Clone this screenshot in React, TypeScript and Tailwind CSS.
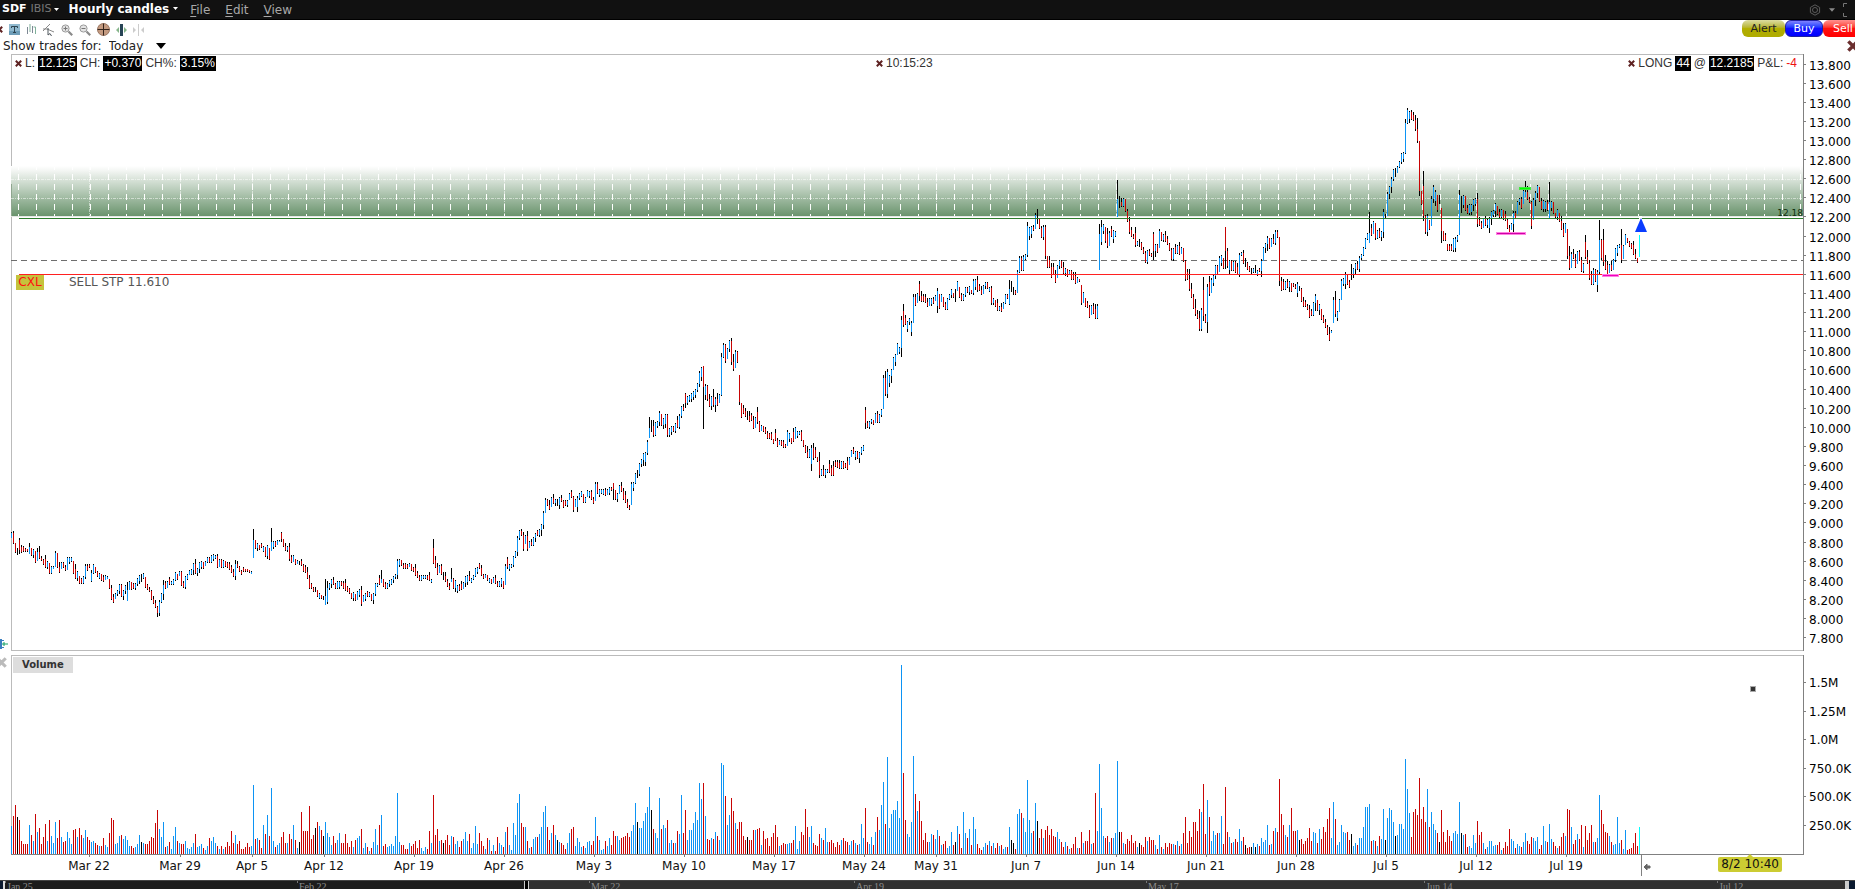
import React from "react";

type Tone = "b" | "r" | "k" | "c";

interface Block {
  base: number;
  data: string;
}

const TONES: Record<Tone, string> = {
  b: "#0c93f4",
  r: "#c80404",
  k: "#000000",
  c: "#00ffff",
};

/* Sample blocks keep three units per pixel. Price samples are high,low[,close]. */
const PRICE_BLOCKS: Block[] = [
  {
    base: 520,
    data: `37,55 33,72 68,98 85,104 54,102,90 75,98 77,97 84,95 86,96 70,102,82 84,108 88,115 93,128 84,122,96 78,118 107,123 116,134 104,143 122,146 128,163 138,162 138,146 94,140 98,145 127,160 126,148 126,145 136,152 111,150 111,132 112,125 122,163 133,178 152,182 168,193 175,193 168,193 132,176 132,152 132,145 150,186,160 132,162 142,158 152,172 160,178 162,182 165,186 165,180 167,178 177,206 195,240 222,250 218,236 210,228 192,222 192,230 210,240 196,221 186,243,210 183,211 185,210 190,208 190,210 174,198 165,193 162,186 160,176 171,204 192,210 200,216 210,240 228,252 240,264 258,291,279 240,288 220,250 180,240,195 183,206 183,204 171,195 183,195 178,195 156,182 162,180 153,168 153,198 183,204 168,208 162,180 150,165 147,165 128,165 118,162 145,169 127,158 123,148 126,146 123,138 111,128 111,128 105,128 102,123 104,116 102,144 117,141 117,145 120,144 122,140 126,144 126,150 135,160 147,171 120,180,132 122,145 138,156 150,164 141,156 147,157 148,157 150,160 153,162
27,113,60 60,87 69,94 75,90 68,84 78,96 82,110 75,117 84,119 24,93,66 63,86 63,82 60,76 60,66 36,66,58 57,82 68,94 78,96 68,122 105,130 105,126 117,134 120,132 123,134 117,138 132,156 135,158 141,178 164,208 190,208 201,216 200,216 210,232 220,236 226,238 228,240 176,255,228 182,252,204 190,210 178,204 171,196 190,208 183,208 182,207 183,198 183,208 177,214 198,216 204,222 218,238 216,243 222,243 213,240 207,232 198,258 225,246 218,242 213,232 217,230 222,243 219,252 190,228 189,200 165,196 150,190,177 177,200 186,208 190,206 180,200 177,196 168,190 162,176 117,176 118,140 120,138 128,146 129,146 132,146 129,140 133,152 141,156 132,168 153,174 165,182 165,182 165,178 165,176 165,180 156,182 177,188
57,132,130 108,145 128,166 135,160 132,165 156,180 156,186 177,202 190,209 144,186,177 175,208 180,216 195,220 192,213`,
  },
  {
    base: 320,
    data: `783,810 786,806 768,800 765,796 753,782 775,788 765,780 745,770 741,762 729,746 735,768 762,776 762,774 765,782 774,788 777,792 771,788 765,792 782,800 784,802 775,800 782,806 732,796 711,746,740 732,752 732,744 708,741 693,714 648,708 630,660 627,648 636,693 645,672 633,693 663,685 657,678 651,678 639,666 630,648 627,651 612,648 573,627 534,579 537,558 540,570 531,560 522,552 537,558 537,558 531,567 525,546 540,564 540,558 540,560 519,540 510,534 528,576 537,561 528,576 519,540 513,531 522,550 530,549 510,532 513,534 510,540 532,552 486,543 486,522 507,530 507,522 507,525 504,528 507,525 501,525 501,513 489,540,508 510,540 519,546 495,522 486,516 504,540 513,549 537,564 555,570 486,555 486,513 459,492 450,474 429,468 417,440 399,438 396,438 360,405 291,354,324 300,336 300,351 306,348 303,324 273,318 282,318 294,326 282,324 282,351 324,351 318,345 318,336 309,339 288,324 282,327 258,294 252,273 219,264,248 228,255 225,246 219,246 213,240 207,234 189,216 153,201 141,183
138,327,201 192,240 195,243 222,261 228,270 207,261 231,276 219,258 222,249 99,228 69,114 72,129 84,117 60,96 54,135 102,153 90,144 93,129
165,255 249,294 255,282 264,291 273,300 273,306 279,303 288,327 291,324 261,312,306 303,336 315,333 318,336 321,342 333,357 339,357 336,360 357,372 327,363 354,381 360,375 360,378 360,384 372,384 330,378 339,366 354,372 324,366 321,357 333,354 333,345 330,363 360,381 375,399 378,414 387,414 375,453,384 369,420 381,414 411,426 396,474 447,468 435,468 447,474 447,459 420,459 435,468 423,468 420,441 420,444 420,447 423,447 423,447 429,444 411,450 411,435 390,411 381,402 393,420 393,417 396,429 381,405 375,393
261,327,309 303,324 303,327 297,312 300,315 279,309 273,309 282,309 267,291 165,267 153,228 147,234 165,201 147,189 111,150 102,138 69,105 81,102`,
  },
  {
    base: 140,
    data: `528,651 492,561 525,555 543,576 534,555 543,588 462,549 462,498 459,489 423,483,468 453,486 462,486 462,489 474,501 474,498 474,498 471,492 465,483 444,519 462,507 462,486 471,501 486,510 474,510 462,480 447,474 459,474 447,486 423,453 441,474 459,483 462,483 441,471 441,459 438,465 450,462 417,465 417,450 408,456,450 432,453 438,465 435,462 426,447 426,447 441,456 438,495 474,495 480,501 477,513 498,513 489,516 486,507 462,492 462,477 420,495,448 423,456 441,465 450,465 390,459 348,399 348,393 345,393 342,360 246,351 261,300 258,294 255,273 219,267 207,252 234,267 258,294 255,300 255,357 348,384 348,384 369,414 369,405 390,429 375,414 360,387 360,384 366,402 384,408 387,411 390,405 390,420 396,420 396,432 411,429 417,426
435,495 456,489 474,501 483,504 495,534 495,525 489,522 492,537 492,537
252,390,282 240,315,261 252,282 261,309 264,324 273,318 258,291 270,309 273,291 120,231,176 168,204 174,201 174,201 177,216 207,246 231,282 261,291 282,297 261,321 303,318 297,321 306,330 321,342 333,369 330,372 327,348 339,351 276,360,333 312,351 312,339 267,324 276,303 282,306 273,306 288,315 309,333 324,360 324,363 312,342 315,342 306,345 321,342 324,366 360,423 387,420 387,453 429,474 462,507 477,528 510,537 513,573 504,573 411,543,528 522,549 432,579,440 408,468 414,459 405,438 375,417 375,405 348,396 345,378 354,387 261,387,334 324,384 360,402 360,393 363,393 363,399 369,405 339,411`,
  },
  {
    base: 90,
    data: `486,498 480,522 504,531 516,540 528,546 534,555 534,549 525,549 540,558 534,546 507,561 471,513 459,489 438,483 444,477 444,471 432,462 420,465 420,444 441,588 561,603 567,600 573,600 567,594 573,606 579,606 579,591 582,597 576,621 588,603 594,636 621,651 630,651 642,660 645,684 657,678 636,678 612,663 630,663 642,675 657,690 675,699 687,714 705,735 711,753 720,729
621,699 603,681 663,693 627,666 567,630 564,588 546,597 555,585 570,594 522,570 534,564 519,552 513,540 498,546 492,510 471,498 444,477 429,450 366,459,430 402,438 393,432 399,450 420,447 414,444 423,453 357,444 372,384 306,378 288,327 261,309 237,273 234,261 228,249 213,234 189,222 186,216 87,192 54,102 63,99 60,90 66,93 75,123 84,159 153,318 303,345 243,393,378 375,432 372,438 390,420 318,408 285,339 300,348 315,366 315,342 354,459,423 423,453 429,453
462,483 462,483 462,483 443,486 441,486 435,456 300,435 318,369 315,354 318,363 345,372 342,375 342,375 327,363 324,348 309,411 381,408 393,417 384,414 378,408 387,414 381,429 363,405 360,381 339,381 348,375 357,384 357,387 360,390 363,393 387,417 405,432 399,420 363,426 363,387 333,372 324,345 321,357 300,342 273,321,306 288,330 321,339 333,417 324,390 303,348 285,324 291,336 324,360 330,366 333,366 330,363 276,384,336 333,363 336,372 369,384 357,390 369,396 378,420 399,441 399,429
417,507 468,540 486,534 477,507 492,534 483,522 480,513 501,546 519,549 435,507 480,522 510,570 543,585 534,585 537,576 540,606 390,552,450 447,510 417,528 495,540 513,555 522,549 513,543 507,540 474,516 465,498 462,474 417,519 465,507 432,465 444,459 453,471 459,477 453,495 477,507 504,519 429,501`,
  },
];

const VOLUME_BLOCKS: Block[] = [
  {
    base: 1002,
    data: `917b 888r 855r 891k 900r 963r 972r 972r 972r 915b 945r 963b 882r 936b 924r 972r 951r 912r 963b 900r 948b 969b 906b 954r 900r 951b 966r 963r 936b 954b 972b 930r 927r 951b 924r 945r 954b 930b 951r 960r 966b 963b 969r 975r 978b 978r 954r 975b 981b 939r 894r 900r 972b 969b 948b 945r 957b 948b 960b 978b 978r 984r 981b 972b 945b 966k 969b 972r 972r 963r 951r 954r 909r 870r 927b 951b 906b 981r 978b 966r 987b 948b 921b 963r 969b 972r 972r 963b 984b 987b 981b 969b 942r 981b 978b 972b 984r 990b 978b 954r 963b 951b 969b 978r 987b 978r 987b 981r 966r 978r 933r 969r 945b 972r 963r 987r 987r 981r 969r 981r 978b
795b 957r 954b 960r 984r 915b 942r 885b 948r 804b 963b 981r 975b 969b 951r 936r 969r 969b 942r 957r 915b 960r 984b 966k 876r 933r 933r 933r 858r 957r 945r 924k 906r 918b 930r 948k 906b 939b 951b 975b 948r 969r 960b 939b 969r 969r 942r 969r 981r 963r 981b 960r 954b 948b 927r 984b 969b 981r 993b 984r 966b 927b 975b 915r 885b 978r 972r 981b 978b 972b 978b 948b 819b 966b 975r 975r 987r 987r 969b 978r 972r 963r 984r 960r 984b 993b 981b 987r 933r 969b
825r 945r 927r 963b 960r 969k 960r 945r 975r 948b 951r 972b 963b 981r`,
  },
  {
    base: 642,
    data: `603r 597b 576b 603b 582r 624b 609b 558b 612b 579r 603r 618r 627b 594r 600b 633r 615b 633r 591r 609b 615b 621r 576b 561r 615b 630b 549b 585b 489b 462b 549r 561r 561b 603r 624b 621r 597b 591b 591r 582b 561b 516b 498b 561r 600r 579b 555r 585b 600k 606b 609r 615r 627r 609b 579b 567r 561r 618b 594b 606b 621b 618r 624b 606b 603b 615r 603r 531b 588r 600b 630b 627b 603r 618b 594b 615r 573r 588r 588b 600b 594r 591r 588r 579r 591r 573b 555b 489b 546k 564b 564b 543b 519b 501b 441b 510k 567r 579b 594b 474b 567r 555b 564b 540r 609b 600b 609r 609b 573r 582b 465b 579r 510r 600b 570b 570b 549b 516b 540b 429b 477b 429r 528b 597r 600r 594b 597r 576b 588r 600b 369b 375b 468r 555b 525b 474r 513r 549b 567r 546r 546r 588r 600r 591k 600r 600r 570r 570b 567r 564r 615b 573r 597r 594r 618r 591r 579r 555r 591r 618b 615r 609r 612r 612b 609b 609r 600r 558b 627b 603b 576r 585r 507r 561r 591b 558b 609r 615r 618r 582r 594b 600r 564b 606b 606r 600r 609r 621r 606r 615r 600b 594r 603r 606r 615b 603b 600r 609b 615r 612b 552b 594b 504r 606r 612b 591b 615r 576b 531r 570b 495b 426b 552r 351b 564b 522b 510b 510b 483b 534b 75b 399r 540r 582b 591b 546b 348b 462r 513b 483r
543r 600r 579r 606r 606b 582b 585r 597b 570b 588r 615b 612r 603r 624b 618b 576b 615r 606k 558b 582r 624r 516b 579b 594r 567b 615r 531b 567b 612r 624r 630r 621b 609b 615r 603b 618r 609b 624r 609r 618b 615r 627b 621b 621r 561b 600k 609k 627r 522b 507b 519r 534b 576b 420b 540b 579b 573r 489b 543k 594r 567r 594b 570r 558r 585r 567r 588r 591r 576b 597b 606r 621r 606b 618r 627b 624r 612r 591r 624b 624r 576r 609b 603r 603r 570r 612b 609r 459r 573b 372b 504b 588b 594r 588r 606b 594r 594b 579b 363b 576k 576r 609b 612r 597r 603r 585r 609r 603r 621b 609k 615r 621r 591r 603b 591r 600r 600r 615b 627r 585b 621r 627b 609r 621r 609r 612r 612b 615r 603b 618r 612b 579r 531r 609r 573r 591r 546r 546r 573r 507r 516b 432r 582r 480b 531r 603b 573b 585b 579r 579b 528b 612r 441r 576r 591b 609r 606b 597r 606r 567b 603b 591r 615k 624r 621r 621k 609b 621k 612b 618r 594b 606b 600b 555b 615r 612b 573r 564b 576r 417r 522r 555r 585b 591r 555b 504r 573r 573r 570b 600k 597r 612r 603r 594r 564r 603r 576b 579b 609r 567b 597r 561r 576r 537r 504r 594b 486b 537r 615b 606b 555b 576b 579b 576r 600r 582k 618b 609b 615r 594b 594b 561b 501b 501b 492b 603r 600b 603r 618b 588r 597b 507b 600k 534b 504b 510b 546b 588k 585b 552b`,
  },
  {
    base: 702,
    data: `612b 627b 417b 507b 579b 651r 576r 567r 585r 474r 597r 561r 606r 507b 621r 576b 612b 630b 639r 666k 570r 636r 666r 630r 648r 663r 639b 633b 642b 546b 639k 645b 642r 681r 678b 684b 645b 669b 603r 645r 636r 669b 687r 681b 663b 663b 678b 675b 675r 666r 690b 684r 666r 678r 627r 657b 663b 684r 672b 678b 681r 666b 639b 663r 672r 651r 654b 663b 651b 687r 675r 618b 663b 666r 612b 657b 666r 678r 684b 678r 651r 639r 648b 567r 570r 621b 672r 660r 642b 657r 615r 681b 618r 660r 639r 615r 666b 666r 654b 525b 570r 612r 636r 639r 648b 666r 675b 672b 591b 669b 660r 687b 630b 690r 687r 684r 669r 639r 678r 621c`,
  },
];

interface Bar {
  x: number;
  tone: Tone;
  volume: number;
  high: number;
  low: number;
  bodyTop: number;
  bodyBottom: number;
}

const PLOT_TOP = 54;

function buildBars(): Bar[] {
  const volumes = VOLUME_BLOCKS.flatMap(({ base, data }) =>
    data.split(/\s+/).map((s) => ({
      volume: Math.round((base - parseInt(s, 10)) / 3),
      tone: s.slice(-1) as Tone,
    })),
  );
  const prices = PRICE_BLOCKS.flatMap(({ base, data }) =>
    data.split(/\s+/).map((s) =>
      s.split(",").map((v, k) => (k === 2 ? base - PLOT_TOP + Number(v) / 3 : Math.round(base - PLOT_TOP + Number(v) / 3))),
    ),
  );
  const count = Math.min(volumes.length, prices.length);
  const bars: Bar[] = [];
  let previous = prices[0][1];
  for (let i = 0; i < count; i++) {
    const [high, low, fixedClose] = prices[i];
    const { tone, volume } = volumes[i];
    const span = low - high;
    const wick = Math.max(1, span * 0.1);
    const rising = tone === "b" || tone === "c";
    const close = fixedClose ?? (tone === "k" ? (high + low) / 2 : rising ? high + wick : low - wick);
    let open = Math.min(Math.max(previous, high), low);
    if (tone === "k") open = close;
    else if (rising && open - close < span * 0.4) open = Math.min(low, close + span * 0.6);
    else if (!rising && close - open < span * 0.4) open = Math.max(high, close - span * 0.6);
    if (tone === "c") open = low;
    bars.push({
      x: i * 2,
      tone,
      volume,
      high: Math.round(tone === "c" ? close : high),
      low: Math.round(low),
      bodyTop: Math.round(Math.min(open, close)),
      bodyBottom: Math.round(Math.max(open, close)),
    });
    previous = close;
  }
  return bars;
}

const BARS = buildBars();

const PRICE_LEVELS = Array.from({ length: 31 }, (_, i) => (13.8 - i * 0.2).toFixed(3));

const VOLUME_LEVELS = [
  { label: "1.5M", y: 27 },
  { label: "1.25M", y: 56 },
  { label: "1.0M", y: 84 },
  { label: "750.0K", y: 113 },
  { label: "500.0K", y: 141 },
  { label: "250.0K", y: 170 },
];

const WEEKS = [
  { label: "Mar 22", x: 78 },
  { label: "Mar 29", x: 169 },
  { label: "Apr 5", x: 241 },
  { label: "Apr 12", x: 313 },
  { label: "Apr 19", x: 403 },
  { label: "Apr 26", x: 493 },
  { label: "May 3", x: 583 },
  { label: "May 10", x: 673 },
  { label: "May 17", x: 763 },
  { label: "May 24", x: 853 },
  { label: "May 31", x: 925 },
  { label: "Jun 7", x: 1015 },
  { label: "Jun 14", x: 1105 },
  { label: "Jun 21", x: 1195 },
  { label: "Jun 28", x: 1285 },
  { label: "Jul 5", x: 1375 },
  { label: "Jul 12", x: 1465 },
  { label: "Jul 19", x: 1555 },
];

const RANGE_MARKS = [
  { label: "Jan 25", x: 5 },
  { label: "Feb 22", x: 297 },
  { label: "Mar 22", x: 589 },
  { label: "Apr 19", x: 854 },
  { label: "May 17", x: 1146 },
  { label: "Jun 14", x: 1424 },
  { label: "Jul 12", x: 1717 },
];

function Cross({ className }: { className: string }) {
  return (
    <svg viewBox="0 0 7 7" className={className} aria-hidden="true">
      <path d="M0.8 0.8 6.2 6.2M6.2 0.8 0.8 6.2" stroke="currentColor" strokeWidth="2" />
    </svg>
  );
}

function Caret({ className }: { className: string }) {
  return (
    <svg viewBox="0 0 10 6" className={className} aria-hidden="true">
      <path d="M0 0H10L5 6Z" fill="currentColor" />
    </svg>
  );
}

function TitleBar() {
  return (
    <header className="flex h-5 shrink-0 items-center border-b border-black bg-[#111111] font-['DejaVu_Sans',sans-serif] text-xs text-[#a8a8a8]">
      <button className="flex items-center gap-1 pl-0.5 text-[11px]">
        <b className="text-white">SDF</b>
        <span className="text-[11px] text-[#777777]">IBIS</span>
        <Caret className="-ml-0.5 h-[3px] w-[5px] text-white" />
      </button>
      <button className="ml-2.5 flex items-center gap-1 pb-0.5 text-xs font-bold text-white">
        Hourly candles
        <Caret className="h-[3px] w-[5px]" />
      </button>
      <nav className="ml-3 flex gap-[15px]">
        <a href="#file"><span className="underline underline-offset-2">F</span>ile</a>
        <a href="#edit"><span className="underline underline-offset-2">E</span>dit</a>
        <a href="#view"><span className="underline underline-offset-2">V</span>iew</a>
      </nav>
      <div className="-mr-1 ml-auto flex items-center gap-2">
        <button aria-label="Settings">
          <svg viewBox="0 0 12 12" className="block h-3 w-3" fill="none" stroke="#5c5c5c">
            <path d="M6 0.8 10.6 3.4V8.6L6 11.2 1.4 8.6V3.4Z" />
            <circle cx="6" cy="6" r="2.5" />
          </svg>
        </button>
        <button aria-label="More">
          <Caret className="block h-1 w-1.5 text-[#8a8a8a]" />
        </button>
        <button aria-label="Full screen">
          <svg viewBox="0 0 16 14" className="block h-3.5 w-4" fill="none" stroke="#777777">
            <path d="M0.5 4V0.5H4M12 0.5H15.5V4M15.5 10V13.5H12M4 13.5H0.5V10" />
          </svg>
        </button>
      </div>
    </header>
  );
}

function ToolIcons() {
  return (
    <div className="flex items-center gap-1.5">
      <button aria-label="Close toolbar" className="w-[3px] overflow-hidden text-[#5e2222]">
        <Cross className="-ml-1 block h-[7px] w-[7px]" />
      </button>
      <button aria-label="Text note">
        <svg viewBox="0 0 11 11" className="block h-[11px] w-[11px]">
          <rect width="11" height="11" fill="#8fb9cf" />
          <rect y="7" width="11" height="4" fill="#6d9db8" />
          <path d="M2.5 4V2.5H8.5V4M5.5 2.5V8.5M4 8.5H7" stroke="#2c4450" fill="none" />
        </svg>
      </button>
      <button aria-label="Bar style">
        <svg viewBox="0 0 11 11" className="block h-[11px] w-[11px]" fill="none">
          <path d="M1.5 3V10M6.5 2V9" stroke="#7d8894" />
          <path d="M4 0V8M9.5 3V10M7.5 3H9.5" stroke="#7fb09a" />
        </svg>
      </button>
      <button aria-label="Trendline">
        <svg viewBox="0 0 12 12" className="block h-3 w-3" fill="none">
          <path d="M0 7 7 0M0 5H4L11 8" stroke="#888888" />
          <path d="M5 4V11L7 9.5 8.5 12" stroke="#4f565c" />
        </svg>
      </button>
      {["+", "-"].map((sign) => (
        <button key={sign} aria-label={sign === "+" ? "Zoom in" : "Zoom out"}>
          <svg viewBox="0 0 12 12" className="block h-3 w-3" fill="none">
            <circle cx="4.5" cy="4.5" r="3.6" fill="#e4e4e4" stroke="#9a9a9a" />
            <path d="M7.5 7.5 11.2 11.2" stroke="#8a8a8a" strokeWidth="2.2" />
            <path d={sign === "+" ? "M2.5 4.5H6.5M4.5 2.5V6.5" : "M2.5 4.5H6.5"} stroke="#777777" />
          </svg>
        </button>
      ))}
      <button aria-label="Crosshair">
        <svg viewBox="0 0 13 13" className="block h-[13px] w-[13px]">
          <circle cx="6.5" cy="6.5" r="6" fill="#c39a80" stroke="#9a7763" />
          <path d="M0.5 6.5H12.5M6.5 0.5V12.5" stroke="#33231b" />
        </svg>
      </button>
      <button aria-label="Widen bars">
        <svg viewBox="0 0 11 12" className="block h-3 w-[11px]">
          <rect x="4" width="3" height="12" fill="#274456" />
          <path d="M3 3V9L0 6ZM8 3V9L11 6Z" fill="#86b58a" />
        </svg>
      </button>
      <button aria-label="Narrow bars">
        <svg viewBox="0 0 11 12" className="block h-3 w-[11px]" fill="#cccccc">
          <rect x="5" width="1" height="12" />
          <path d="M0 3V9L3 6ZM11 3V9L8 6Z" />
        </svg>
      </button>
    </div>
  );
}

function ToolBar() {
  return (
    <div className="flex h-[34px] shrink-0 justify-between font-['DejaVu_Sans',sans-serif] text-xs text-[#222222]">
      <div className="flex flex-col gap-0.5 pt-[3px]">
        <ToolIcons />
        <div className="flex items-center gap-[7px] pl-[3px]">
          <label htmlFor="trades" className="text-xs leading-4">Show trades for:</label>
          <span className="flex items-center gap-2">
            <select id="trades" className="h-4 w-[39px] appearance-none bg-white text-xs leading-4" defaultValue="Today">
              <option>Today</option>
            </select>
            <Caret className="h-1.5 w-2.5 text-black" />
          </span>
        </div>
      </div>
      <div className="flex flex-col items-end gap-[3px] overflow-hidden">
        <div className="-mr-2 flex text-[11px] leading-[17px]">
          <button className="w-[43px] rounded-md bg-linear-to-b from-[#dcdca0] via-[#b4b000] to-[#b0ac00] to-60%">Alert</button>
          <button className="w-[38px] rounded-md border border-[#2020a0] bg-linear-to-b from-[#8080ff] via-[#1010ff] to-[#0000ff] leading-[15px] text-white">Buy</button>
          <button className="w-10 rounded-md bg-linear-to-b from-[#ff9090] via-[#ff1010] to-[#ff0000] text-white">Sell</button>
        </div>
        <button aria-label="Close panel" className="-mr-1 text-[#6a2e2e]">
          <Cross className="block h-3 w-3" />
        </button>
      </div>
    </div>
  );
}

function Field({ value }: { value: string }) {
  return <span className="bg-black px-px text-white">{value}</span>;
}

function PricePlot() {
  return (
    <svg className="block h-[597px] w-full overflow-hidden" shapeRendering="crispEdges">
      <defs>
        <linearGradient id="zone" x1="0" y1="0" x2="0" y2="1">
          <stop offset="0" stopColor="#ffffff" />
          <stop offset="0.1" stopColor="#f2f5f2" />
          <stop offset="1" stopColor="#6a946d" />
        </linearGradient>
        <pattern id="sessions" width="18" height="10" patternUnits="userSpaceOnUse">
          <rect x="7" width="1" height="6" fill="#ffffff" />
        </pattern>
      </defs>
      <rect width="1" height="597" fill="#bbbbbb" />
      <rect y="112" width="100%" height="50" fill="url(#zone)" />
      <rect width="1" y="130" height="32" fill="#8fa68f" />
      <rect y="113" width="100%" height="49" fill="url(#sessions)" />
      <g stroke="#ffffff" strokeOpacity="0.5">
        <line x1="0" x2="100%" y1="125.5" y2="125.5" strokeDasharray="3 1 1 1" />
        <line x1="0" x2="100%" y1="144.5" y2="144.5" strokeDasharray="3 1 1 1" />
        {WEEKS.map((w) => (
          <line key={w.label} x1={w.x + 0.5} x2={w.x + 0.5} y1="113" y2="162" strokeDasharray="3 1 1 1" />
        ))}
      </g>
      <rect y="162" width="100%" height="1" fill="#e4e8e4" />
      <line x1="0" x2="100%" y1="206.5" y2="206.5" stroke="#6e6e6e" strokeDasharray="6 4" />
      <g>
        {BARS.map((b) => (
          <g key={b.x}>
            {b.tone !== "c" && <rect x={b.x} y={b.high} width="1" height={b.low - b.high} fill="#000000" />}
            {b.tone !== "k" && (
              <rect x={b.x} y={b.bodyTop} width="1" height={Math.max(1, b.bodyBottom - b.bodyTop)} fill={TONES[b.tone]} />
            )}
          </g>
        ))}
      </g>
      <rect x="8" y="164" width="100%" height="1" fill="#2d7d2d" />
      <rect x="8" y="220" width="100%" height="1" fill="#ff2020" />
      <g>
        <rect x="1485" y="178" width="30" height="3" fill="#ff7fe0" />
        <rect x="1486" y="179" width="28" height="1" fill="#d000a8" />
        <rect x="1591" y="220" width="17" height="3" fill="#ff7fe0" />
        <rect x="1592" y="221" width="15" height="1" fill="#f000c0" />
        <rect x="1508" y="133" width="12" height="3" fill="#40e840" />
        <rect x="1509" y="134" width="10" height="1" fill="#00ff00" />
      </g>
      <rect x="1628" y="162" width="3" height="3" fill="#ffffff" />
      <path d="M1630 164 1636 178H1624Z" fill="#0a3cff" shapeRendering="auto" />
      <rect width="100%" height="1" fill="#bbbbbb" />
      <rect y="596" width="100%" height="1" fill="#bbbbbb" />
    </svg>
  );
}

function VolumePlot() {
  return (
    <svg className="block h-[200px] w-full overflow-hidden" shapeRendering="crispEdges">
      <rect width="100%" height="1" fill="#bbbbbb" />
      <rect width="1" height="200" fill="#bbbbbb" />
      {BARS.map((b) => (
        <rect key={b.x} x={b.x} y={199 - b.volume} width="1" height={b.volume} fill={TONES[b.tone]} />
      ))}
      <rect y="199" width="100%" height="1" fill="#808080" />
    </svg>
  );
}

function PriceAxis() {
  return (
    <svg className="block h-[597px] w-full font-['DejaVu_Sans',sans-serif] text-xs" fill="#000000">
      <rect width="1" height="597" fill="#808080" />
      {PRICE_LEVELS.map((label, i) => {
        const y = Math.floor(11 + i * 19.12);
        return (
          <g key={label}>
            <rect x="1" y={y - 1} width="2" height="1" fill="#808080" />
            <text x="6" y={y + 5}>{label}</text>
          </g>
        );
      })}
    </svg>
  );
}

function VolumeAxis() {
  return (
    <svg className="block h-[200px] w-full font-['DejaVu_Sans',sans-serif] text-xs" fill="#000000">
      <rect width="1" height="200" fill="#808080" />
      {VOLUME_LEVELS.map(({ label, y }) => (
        <g key={label}>
          <rect x="1" y={y} width="2" height="1" fill="#808080" />
          <text x="6" y={y + 5}>{label}</text>
        </g>
      ))}
    </svg>
  );
}

function TimeAxis() {
  return (
    <div className="relative">
      <svg className="block h-[25px] w-full font-['DejaVu_Sans',sans-serif] text-xs" fill="#111111">
        {WEEKS.map(({ label, x }) => (
          <g key={label}>
            <rect x={x} width="1" height="2" fill="#808080" />
            <text x={x} y="15" textAnchor="middle">{label}</text>
          </g>
        ))}
        <rect x="1630" width="1" height="21" fill="#808080" />
        <path d="M1633 12 1636 9V11H1639V13H1636V15Z" fill="#666666" stroke="#666666" />
      </svg>
      <div className="absolute top-0.5 right-[21px] rounded-xs bg-[#cccc33] px-[3px] font-['DejaVu_Sans',sans-serif] text-xs leading-[15px] text-[#111111]">
        <svg viewBox="0 0 6 3" className="absolute -top-[3px] left-[29px] h-[3px] w-1.5">
          <path d="M0 3 3 0 6 3Z" fill="#cccc33" />
        </svg>
        8/2 10:40
      </div>
    </div>
  );
}

function Navigator() {
  return (
    <footer className="relative flex h-[9px] shrink-0 overflow-hidden border-t border-[#444444] bg-[#303030] font-['Liberation_Serif',serif] text-[10px] text-[#8c8c8c]">
      <div className="w-[5px] border-r-2 border-[#dddddd] bg-[#0b1a30]" />
      <div className="w-[519px] bg-[#1c1c1c]" />
      <div className="w-[5px] border-x border-[#cccccc] bg-black" />
      <div className="flex-1" />
      <div className="w-2.5 border-l-4 border-[#cccccc] bg-[#0b1a30]" />
      <svg className="absolute inset-0 h-3 w-full" fill="#8c8c8c">
        {RANGE_MARKS.map(({ label, x }) => (
          <g key={label}>
            <rect x={x} width="1" height="2" fill="#777777" />
            <text x={x + 2} y="9">{label}</text>
          </g>
        ))}
      </svg>
    </footer>
  );
}

export default function App() {
  return (
    <div className="flex min-h-screen flex-col overflow-hidden bg-white">
      <TitleBar />
      <ToolBar />
      <main className="grid grid-cols-[11px_minmax(0,1fr)_52px]">
        <div className="flex items-end pb-0.5">
          <svg viewBox="0 0 8 10" className="h-2.5 w-2">
            <path d="M0 0H2V10H0ZM2 1H4V2H2ZM2 8H4V9H2Z" fill="#3a7fc0" />
            <path d="M2 5H8M4 3V7" stroke="#10a060" />
          </svg>
        </div>
        <section className="relative" aria-label="Price">
          <PricePlot />
          <div className="absolute inset-x-1 top-0.5 flex justify-between font-['Liberation_Sans',sans-serif] text-xs leading-[15px] text-[#333333]">
            <p className="flex items-center gap-[3px]">
              <Cross className="mt-1 h-[7px] w-[7px] self-start text-[#5e2222]" />
              <span>L:</span>
              <Field value="12.125" />
              <span>CH:</span>
              <Field value="+0.370" />
              <span>CH%:</span>
              <Field value="3.15%" />
            </p>
            <p className="flex items-center gap-[3px]">
              <Cross className="mt-1 h-[7px] w-[7px] self-start text-[#5e2222]" />
              <span>LONG</span>
              <Field value="44" />
              <span>@</span>
              <Field value="12.2185" />
              <span>P&amp;L:</span>
              <span className="pr-0.5 text-[#ee1111]">-4</span>
            </p>
          </div>
          <p className="absolute top-0.5 left-[865px] flex gap-[3px] font-['Liberation_Sans',sans-serif] text-xs leading-[15px] text-[#333333]">
            <Cross className="mt-1 h-[7px] w-[7px] text-[#5e2222]" />
            10:15:23
          </p>
          <div className="absolute top-[221px] left-[5px] flex gap-[25px] font-['DejaVu_Sans',sans-serif] text-xs leading-[15px] text-[#555555]">
            <button className="w-7 bg-[#c5c33c] text-center text-[#ff1010]">CXL</button>
            <span>SELL STP 11.610</span>
          </div>
          <span className="absolute top-[153px] right-0 font-['DejaVu_Sans',sans-serif] text-[9px] leading-3 text-[#10300f]">
            12.18
          </span>
        </section>
        <PriceAxis />

        <div className="col-span-3 h-1" />

        <div className="-ml-1 pt-0.5 text-[#bbbbbb]">
          <Cross className="h-[11px] w-[11px]" />
        </div>
        <section className="relative" aria-label="Volume">
          <VolumePlot />
          <h2 className="absolute top-0.5 left-0.5 bg-[#dddddd] px-[9px] font-['DejaVu_Sans',sans-serif] text-[10px] leading-4 font-bold text-[#333333]">
            Volume
          </h2>
          <i className="absolute top-[31px] right-[47px] h-1.5 w-1.5 border border-[#aaaaaa] bg-[#333333]" />
        </section>
        <VolumeAxis />

        <div />
        <TimeAxis />
        <div />
      </main>
      <Navigator />
    </div>
  );
}
